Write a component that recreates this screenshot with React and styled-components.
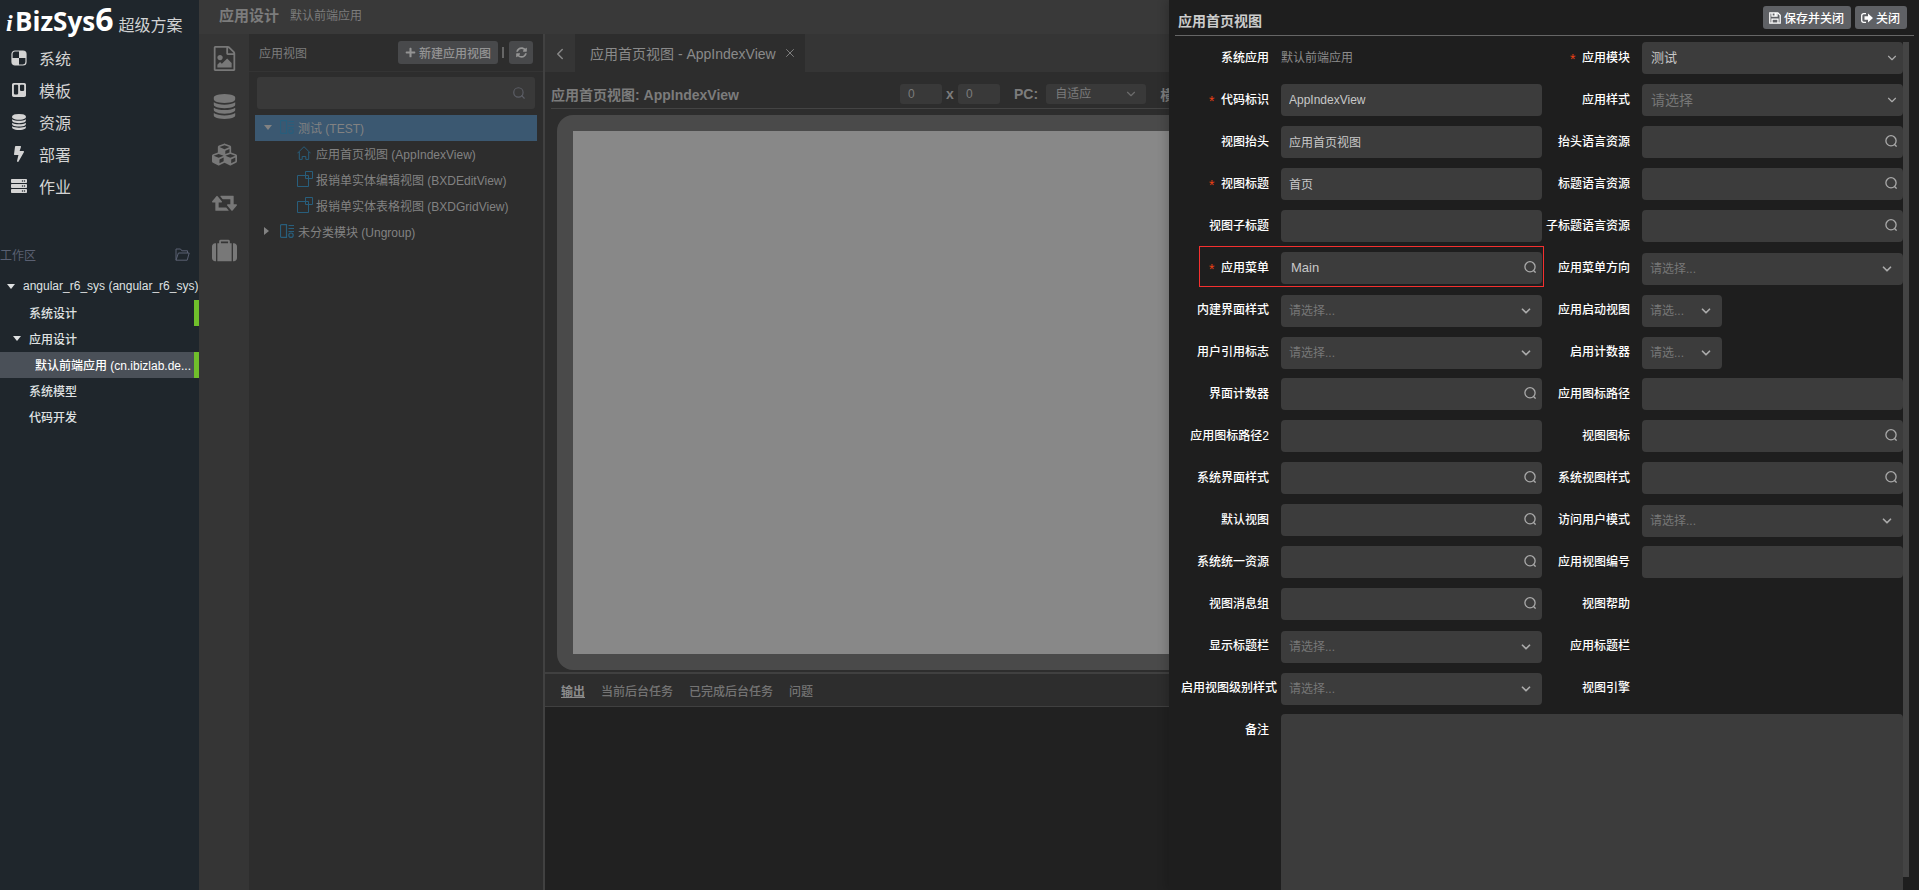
import styled, { createGlobalStyle, css } from 'styled-components';
import { FaBolt, FaCubes, FaPlus, FaServer, FaSyncAlt, FaTrello } from 'react-icons/fa';
import { FiChevronDown, FiChevronLeft, FiSearch, FiX } from 'react-icons/fi';

const menus = [
    { label: '系统', icon: <CheckerIcon /> },
    { label: '模板', icon: <FaTrello /> },
    { label: '资源', icon: <DatabaseIcon /> },
    { label: '部署', icon: <FaBolt /> },
    { label: '作业', icon: <FaServer /> }
];

const workspace = [
    { label: 'angular_r6_sys (angular_r6_sys)', level: 0, open: true },
    { label: '系统设计', level: 1, mark: true },
    { label: '应用设计', level: 1, open: true },
    { label: '默认前端应用 (cn.ibizlab.de...', level: 2, mark: true, active: true },
    { label: '系统模型', level: 1 },
    { label: '代码开发', level: 1 }
];

const rail = [
    { label: '视图', icon: <FileImageIcon /> },
    { label: '数据', icon: <DatabaseIcon /> },
    { label: '组件', icon: <FaCubes /> },
    { label: '流转', icon: <RetweetIcon /> },
    { label: '资源包', icon: <SuitcaseIcon /> }
];

const views = [
    { label: '测试 (TEST)', icon: <ModuleIcon />, caret: 'down', active: true },
    { label: '应用首页视图 (AppIndexView)', icon: <HomeIcon />, child: true },
    { label: '报销单实体编辑视图 (BXDEditView)', icon: <ViewIcon />, child: true },
    { label: '报销单实体表格视图 (BXDGridView)', icon: <ViewIcon />, child: true },
    { label: '未分类模块 (Ungroup)', icon: <ModuleIcon />, caret: 'right' }
];

const outputTabs = ['输出', '当前后台任务', '已完成后台任务', '问题'];

// type: text | input | picker | combo | select | none
const fields = [
    { name: 'sysapp', label: '系统应用', type: 'text', value: '默认前端应用' },
    { name: 'module', label: '应用模块', type: 'combo', value: '测试', required: true },
    { name: 'code', label: '代码标识', type: 'input', value: 'AppIndexView', required: true },
    { name: 'style', label: '应用样式', type: 'combo', placeholder: '请选择' },
    { name: 'caption', label: '视图抬头', type: 'input', value: '应用首页视图' },
    { name: 'captionRes', label: '抬头语言资源', type: 'picker' },
    { name: 'title', label: '视图标题', type: 'input', value: '首页', required: true },
    { name: 'titleRes', label: '标题语言资源', type: 'picker' },
    { name: 'subtitle', label: '视图子标题', type: 'input' },
    { name: 'subtitleRes', label: '子标题语言资源', type: 'picker' },
    { name: 'menu', label: '应用菜单', type: 'picker', value: 'Main', required: true, marked: true },
    { name: 'menuDir', label: '应用菜单方向', type: 'select', placeholder: '请选择...' },
    { name: 'innerStyle', label: '内建界面样式', type: 'select', placeholder: '请选择...' },
    { name: 'startView', label: '应用启动视图', type: 'select', placeholder: '请选...', small: true },
    { name: 'userRef', label: '用户引用标志', type: 'select', placeholder: '请选择...' },
    { name: 'counterOn', label: '启用计数器', type: 'select', placeholder: '请选...', small: true },
    { name: 'counter', label: '界面计数器', type: 'picker' },
    { name: 'iconPath', label: '应用图标路径', type: 'input' },
    { name: 'iconPath2', label: '应用图标路径2', type: 'input' },
    { name: 'viewIcon', label: '视图图标', type: 'picker' },
    { name: 'sysStyle', label: '系统界面样式', type: 'picker' },
    { name: 'sysViewStyle', label: '系统视图样式', type: 'picker' },
    { name: 'defView', label: '默认视图', type: 'picker' },
    { name: 'userMode', label: '访问用户模式', type: 'select', placeholder: '请选择...' },
    { name: 'unires', label: '系统统一资源', type: 'picker' },
    { name: 'viewNo', label: '应用视图编号', type: 'input' },
    { name: 'msgGroup', label: '视图消息组', type: 'picker' },
    { name: 'help', label: '视图帮助', type: 'none' },
    { name: 'showTitle', label: '显示标题栏', type: 'select', placeholder: '请选择...' },
    { name: 'appTitle', label: '应用标题栏', type: 'none' },
    { name: 'levelStyle', label: '启用视图级别样式', type: 'select', placeholder: '请选择...' },
    { name: 'engine', label: '视图引擎', type: 'none' }
];

function CheckerIcon() {
    return (
        <svg viewBox="0 0 16 16" width="1em" height="1em" fill="currentColor">
            <rect x="1" y="1" width="14" height="14" rx="3" fill="none" stroke="currentColor" strokeWidth="1.2" />
            <path d="M8 1h4a3 3 0 0 1 3 3v4H8zM1 8h7v7H4a3 3 0 0 1-3-3z" />
        </svg>
    );
}

function DatabaseIcon() {
    return (
        <svg viewBox="0 0 1536 1792" width="1em" height="1em" fill="currentColor">
            <path d="M768 768q237 0 443-43t325-127v170q0 69-103 128t-280 93.5-385 34.5-385-34.5-280-93.5-103-128v-170q119 84 325 127t443 43zm0 768q237 0 443-43t325-127v170q0 69-103 128t-280 93.5-385 34.5-385-34.5-280-93.5-103-128v-170q119 84 325 127t443 43zm0-384q237 0 443-43t325-127v170q0 69-103 128t-280 93.5-385 34.5-385-34.5-280-93.5-103-128v-170q119 84 325 127t443 43zm0-1152q208 0 385 34.5t280 93.5 103 128v128q0 69-103 128t-280 93.5-385 34.5-385-34.5-280-93.5-103-128v-128q0-69 103-128t280-93.5 385-34.5z" />
        </svg>
    );
}

function FileImageIcon() {
    return (
        <svg viewBox="0 0 1792 1792" width="1em" height="1em" fill="currentColor">
            <path d="M1596 380q28 28 48 76t20 88v1152q0 40-28 68t-68 28h-1344q-40 0-68-28t-28-68v-1600q0-40 28-68t68-28h896q40 0 88 20t76 48zm-444-244v376h376q-10-29-22-41l-313-313q-12-12-41-22zm384 1528v-1024h-416q-40 0-68-28t-28-68v-416h-768v1536h1280zm-128-448v320h-1024v-192l192-192 128 128 384-384zm-832-192q-80 0-136-56t-56-136 56-136 136-56 136 56 56 136-56 136-136 56z" />
        </svg>
    );
}

function RetweetIcon() {
    return (
        <svg viewBox="0 0 1920 1792" width="1em" height="1em" fill="currentColor">
            <path d="M1280 1504q0 13-9.5 22.5t-22.5 9.5h-960q-8 0-13.5-2t-9-7-5.5-8-3-11.5-1-11.5v-600h-192q-26 0-45-19t-19-45q0-24 15-41l320-384q19-22 49-22t49 22l320 384q15 17 15 41 0 26-19 45t-45 19h-192v384h576q16 0 25 11l160 192q7 10 7 21zm640-416q0 24-15 41l-320 384q-20 23-49 23t-49-23l-320-384q-15-17-15-41 0-26 19-45t45-19h192v-384h-576q-16 0-25-12l-160-192q-7-9-7-20 0-13 9.5-22.5t22.5-9.5h960q8 0 13.5 2t9 7 5.5 8 3 11.5 1 11.5v600h192q26 0 45 19t19 45z" />
        </svg>
    );
}

function SuitcaseIcon() {
    return (
        <svg viewBox="0 0 1792 1792" width="1em" height="1em" fill="currentColor">
            <path d="M640 384h512v-128h-512v128zm-352 0v1280h-64q-92 0-158-66t-66-158v-832q0-92 66-158t158-66h64zm1120 0v1280h-1024v-1280h128v-160q0-40 28-68t68-28h576q40 0 68 28t28 68v160h128zm384 224v832q0 92-66 158t-158 66h-64v-1280h64q92 0 158 66t66 158z" />
        </svg>
    );
}

function OpenFolderIcon() {
    return (
        <svg viewBox="0 0 15 13" width="15" height="13" fill="none" stroke="currentColor">
            <path d="M1 12.200V1h4.500l1.300 1.800h5.700V5M1 12.200 3.400 5h10.800l-2 7.200z" />
        </svg>
    );
}

function ModuleIcon() {
    return (
        <svg viewBox="0 0 14 14" width="14" height="14" fill="none" stroke="currentColor" strokeWidth="1.2">
            <path d="M1.500.6h5v12.800h-5a1 1 0 0 1-1-1V1.600a1 1 0 0 1 1-1z" />
            <path d="M8.500 1.500H14M8.500 4.500H14M8.500 7.500H14" />
            <circle cx="11" cy="11.200" r="2.200" />
        </svg>
    );
}

function HomeIcon() {
    return (
        <svg viewBox="0 0 14 14" width="14" height="14" fill="none" stroke="currentColor">
            <path d="M0.400 7.300 7 0.700l6.600 6.600M2.300 6v7.400h2.900v-2.900h3.600v2.900h2.900V6" />
        </svg>
    );
}

function ViewIcon() {
    return (
        <svg viewBox="0 0 16 16" width="16" height="16" fill="none" stroke="currentColor">
            <path d="M0.5 4.5h11v11H0.5zM8.500.5h7v7h-7z" />
        </svg>
    );
}

function PickerIcon() {
    return (
        <svg viewBox="0 0 12 12" width="12" height="12" fill="none" stroke="currentColor" strokeWidth="1.3">
            <circle cx="6" cy="5.8" r="5.1" />
            <path d="M9.300 9.300 11.600 11.600" />
        </svg>
    );
}

function SaveIcon() {
    return (
        <svg viewBox="0 0 12 12" width="12" height="12" fill="none" stroke="currentColor" strokeWidth="1.3">
            <path d="M.8.8h8l2.400 2.400v8H.8z" />
            <path d="M3 11V7.200h6V11" />
            <path d="M3 1v3.200h5V1" />
            <path d="M6.500 1v3" strokeWidth="2" />
        </svg>
    );
}

function ExitIcon() {
    return (
        <svg viewBox="0 0 12 10" width="12" height="10">
            <path d="M5 .7H2.700a2 2 0 0 0-2 2v4.600a2 2 0 0 0 2 2H5" fill="none" stroke="currentColor" strokeWidth="1.300" />
            <path d="M3.500 3.200h3.500V.4L12 5 7 9.600V6.800H3.500z" fill="currentColor" />
        </svg>
    );
}

function Control({ field }) {
    const { name, type, value, placeholder, small } = field;

    if (type === 'none') return null;
    if (type === 'text') return <PlainValue>{value}</PlainValue>;
    if (type === 'input') return <TextBox id={name} defaultValue={value} />;
    if (type === 'picker') {
        return (
            <ControlBox>
                <TextBox id={name} defaultValue={value} $picker />
                <Trailing $right={6} $raised><PickerIcon /></Trailing>
            </ControlBox>
        );
    }
    const combo = type === 'combo';
    return (
        <ControlBox $small={small} $shift={!combo}>
            <SelectBox id={name} $combo={combo} $empty={!value}>
                <option>{value || placeholder}</option>
            </SelectBox>
            <Trailing $right={combo ? 4 : 9}>
                <FiChevronDown size={14} strokeWidth={combo ? 2 : 3} />
            </Trailing>
        </ControlBox>
    );
}

function Drawer() {
    return (
        <DrawerPanel>
            <DrawerHead>
                <DrawerTitle>应用首页视图</DrawerTitle>
                <HeadButton><SaveIcon />保存并关闭</HeadButton>
                <HeadButton><ExitIcon />关闭</HeadButton>
            </DrawerHead>
            <DrawerBody>
                <Form>
                    {fields.map((field) => (
                        <Field key={field.name} $marked={field.marked}>
                            <Label
                                as={field.type === 'text' || field.type === 'none' ? 'span' : 'label'}
                                htmlFor={field.type === 'text' || field.type === 'none' ? undefined : field.name}
                            >
                                {field.required && <Star>*</Star>}
                                {field.label}
                            </Label>
                            <Control field={field} />
                        </Field>
                    ))}
                    <Field $wide>
                        <Label htmlFor="memo">备注</Label>
                        <Memo id="memo" />
                    </Field>
                </Form>
                <ScrollThumb />
            </DrawerBody>
        </DrawerPanel>
    );
}

function App() {
    return (
        <Page>
            <GlobalStyle />
            <Sidebar>
                <Logo>
                    <LogoMark>i</LogoMark>
                    <LogoName>BizSys</LogoName>
                    <LogoDigit>6</LogoDigit>
                    <LogoSuffix>超级方案</LogoSuffix>
                </Logo>
                <Menu>
                    {menus.map((menu) => (
                        <MenuItem key={menu.label} href="#">
                            {menu.icon}
                            <span>{menu.label}</span>
                        </MenuItem>
                    ))}
                </Menu>
                <WorkspaceHead>
                    <span>工作区</span>
                    <OpenFolderIcon />
                </WorkspaceHead>
                {workspace.map((node) => (
                    <WorkspaceRow key={node.label} $level={node.level} $mark={node.mark} $active={node.active}>
                        <Caret $dir={node.open ? 'down' : undefined} />
                        <span>{node.label}</span>
                    </WorkspaceRow>
                ))}
            </Sidebar>

            <Workbench>
                <AppHeader>
                    <AppTitle>应用设计</AppTitle>
                    <span>默认前端应用</span>
                </AppHeader>
                <Columns>
                    <Rail>
                        {rail.map((item) => (
                            <RailButton key={item.label} aria-label={item.label}>{item.icon}</RailButton>
                        ))}
                    </Rail>

                    <ViewPanel>
                        <PanelHead>
                            <PanelTitle>应用视图</PanelTitle>
                            <DimButton><FaPlus size={11} />新建应用视图</DimButton>
                            <Bar />
                            <DimButton $square aria-label="刷新"><FaSyncAlt size={11} /></DimButton>
                        </PanelHead>
                        <SearchBox>
                            <SearchInput aria-label="搜索视图" />
                            <FiSearch size={14} />
                        </SearchBox>
                        <ViewTree>
                            {views.map((view) => (
                                <ViewRow key={view.label} $child={view.child} $active={view.active}>
                                    {!view.child && <Caret $dir={view.caret} />}
                                    <ViewIconBox $child={view.child}>{view.icon}</ViewIconBox>
                                    <span>{view.label}</span>
                                </ViewRow>
                            ))}
                        </ViewTree>
                    </ViewPanel>

                    <Editor>
                        <TabBar>
                            <TabScroll aria-label="向左"><FiChevronLeft size={18} /></TabScroll>
                            <Tab>
                                <span>应用首页视图 - AppIndexView</span>
                                <FiX size={14} strokeWidth={1.5} />
                            </Tab>
                        </TabBar>
                        <Stage>
                            <Toolbar>
                                <ToolbarTitle>应用首页视图: AppIndexView</ToolbarTitle>
                                <SizeInput aria-label="宽度" defaultValue="0" />
                                <Times>x</Times>
                                <SizeInput aria-label="高度" defaultValue="0" />
                                <ToolLabel htmlFor="pc">PC:</ToolLabel>
                                <FitBox>
                                    <FitSelect id="pc"><option>自适应</option></FitSelect>
                                    <Trailing $right={8}><FiChevronDown size={14} /></Trailing>
                                </FitBox>
                                <ToolLabel as="span">横屏:</ToolLabel>
                            </Toolbar>
                            <Bezel><Screen /></Bezel>
                        </Stage>
                        <Output>
                            <OutputTabs>
                                {outputTabs.map((tab, i) => (
                                    <OutputTab key={tab} $active={i === 0}>{tab}</OutputTab>
                                ))}
                            </OutputTabs>
                        </Output>
                    </Editor>
                </Columns>
            </Workbench>

            <Drawer />
        </Page>
    );
}

const GlobalStyle = createGlobalStyle`
    * { box-sizing: border-box; }
    body { margin: 0; background: #212121; }
    body, button, input, select, textarea {
        font-family: "Liberation Sans", "Noto Sans CJK SC", sans-serif;
        font-size: 12px;
    }
    button, input, select, textarea { border: 0; margin: 0; outline: none; }
    svg { flex: none; display: block; }
`;

const Page = styled.div`
    position: relative;
    display: flex;
    height: 100vh;
    overflow: hidden;
`;

/* ---- sidebar ---- */
const Sidebar = styled.nav`
    flex: 0 0 199px;
    background: #1f262c;
    color: #dcdcdc;
    white-space: nowrap;
`;

const Logo = styled.div`
    display: flex;
    align-items: baseline;
    height: 42px;
    padding-left: 6px;
    line-height: 38px;
    color: #fff;
    font-family: "Open Sans", sans-serif;
    font-weight: 700;
`;

const LogoMark = styled.span`
    width: 9px;
    font: italic 700 24px "Liberation Serif", serif;
`;

const LogoName = styled.span`
    font-size: 26px;
`;

const LogoDigit = styled.span`
    font-size: 32px;
`;

const LogoSuffix = styled.span`
    margin-left: 5px;
    color: #d0d2d3;
    font: 400 16px "Noto Sans CJK SC", sans-serif;
`;

const Menu = styled.div`
    display: flex;
    flex-direction: column;
`;

const MenuItem = styled.a`
    display: flex;
    align-items: center;
    gap: 12px;
    height: 32px;
    padding-left: 11px;
    color: #d4d4d4;
    font-size: 16px;
    text-decoration: none;
`;

const WorkspaceHead = styled.div`
    display: flex;
    align-items: center;
    justify-content: space-between;
    height: 40px;
    margin-top: 32px;
    padding-right: 9px;
    color: #5a6072;
`;

const WorkspaceRow = styled.div`
    display: flex;
    align-items: center;
    height: 26px;
    padding-bottom: 2px;
    padding-left: ${(p) => p.$level * 6 + 7}px;
    background: ${(p) => (p.$active ? '#4a5058' : 'transparent')};
    color: ${(p) => (p.$active ? '#fff' : '#dfe1e2')};
    font-weight: 500;
    ${(p) => p.$mark && css`border-right: 5px solid #70bf2b;`}
`;

const Caret = styled.i`
    flex: 0 0 16px;
    &::before {
        content: '';
        display: block;
        width: 0;
        border: 4px solid transparent;
        ${(p) => p.$dir === 'down' && css`border-top: 5px solid currentColor; border-bottom: 0;`}
        ${(p) => p.$dir === 'right' && css`border-left: 5px solid currentColor; border-right: 0;`}
    }
`;

/* ---- workbench ---- */
const Workbench = styled.div`
    flex: 1;
    min-width: 0;
    display: flex;
    flex-direction: column;
    color: #7c7c7c;
`;

const AppHeader = styled.header`
    flex: 0 0 34px;
    display: flex;
    align-items: center;
    gap: 11px;
    padding: 0 20px 5px;
    background: #393939;
`;

const AppTitle = styled.strong`
    font-size: 15px;
`;

const Columns = styled.div`
    flex: 1;
    min-height: 0;
    display: flex;
`;

const Rail = styled.div`
    flex: 0 0 50px;
    display: flex;
    flex-direction: column;
    background: #353535;
`;

const RailButton = styled.button`
    display: grid;
    place-items: center;
    height: 48px;
    padding: 0;
    background: none;
    color: #787878;
    font-size: 25px;
`;

const ViewPanel = styled.section`
    flex: 0 0 296px;
    border-right: 2px solid #414141;
    background: #2d2d2d;
`;

const PanelHead = styled.div`
    display: flex;
    align-items: center;
    height: 38px;
    padding: 0 10px;
    border-bottom: 1px solid #343434;
`;

const PanelTitle = styled.span`
    flex: 1;
`;

const DimButton = styled.button`
    display: flex;
    align-items: center;
    justify-content: center;
    gap: 3px;
    width: ${(p) => (p.$square ? 24 : 100)}px;
    height: 23px;
    padding: 0;
    border-radius: 3px;
    background: #48494b;
    color: #949494;
    font-weight: 500;
`;

const Bar = styled.i`
    width: 2px;
    height: 11px;
    margin: 0 5px 0 4px;
    background: #666;
`;

const SearchBox = styled.div`
    display: flex;
    align-items: center;
    height: 32px;
    margin: 5px 8px 6px;
    padding-right: 9px;
    border-radius: 3px;
    background: #393939;
    color: #5c5e66;
`;

const SearchInput = styled.input`
    flex: 1;
    min-width: 0;
    background: none;
    color: #888;
`;

const ViewTree = styled.div`
    padding: 0 6px;
`;

const ViewRow = styled.div`
    display: flex;
    align-items: center;
    height: 26px;
    padding-bottom: 2px;
    padding-left: ${(p) => (p.$child ? 42 : 9)}px;
    background: ${(p) => (p.$active ? '#3b5871' : 'transparent')};
    color: #828282;
`;

const ViewIconBox = styled.span`
    width: ${(p) => (p.$child ? 19 : 18)}px;
    color: #285e7c;
`;

/* ---- editor ---- */
const Editor = styled.main`
    flex: 1;
    min-width: 0;
    display: flex;
    flex-direction: column;
    background: #2d2d2d;
`;

const TabBar = styled.div`
    flex: 0 0 38px;
    display: flex;
    background: #353535;
`;

const TabScroll = styled.button`
    width: 30px;
    padding: 2px 0 0 6px;
    background: none;
    color: #888;
`;

const Tab = styled.div`
    display: flex;
    align-items: center;
    gap: 7px;
    padding: 0 8px 1px 15px;
    background: #2d2d2d;
    color: #8a8a8a;
    font-size: 14px;
`;

const Stage = styled.div`
    flex: 1;
    min-height: 0;
    display: flex;
    flex-direction: column;
    padding: 7px 6px 2px;
`;

const Toolbar = styled.div`
    display: flex;
    align-items: center;
    height: 30px;
    border-bottom: 1px solid #444;
    white-space: nowrap;
`;

const ToolbarTitle = styled.strong`
    width: 349px;
    font-size: 14px;
`;

const SizeInput = styled.input`
    width: 42px;
    height: 20px;
    padding: 0 8px;
    border-radius: 3px;
    background: #393939;
    color: #7c7c7c;
`;

const Times = styled.b`
    width: 16px;
    font-size: 14px;
    text-align: center;
`;

const ToolLabel = styled.label`
    padding: 0 8px 0 14px;
    font-size: 14px;
    font-weight: 700;
`;

const FitBox = styled.div`
    position: relative;
    width: 100px;
`;

const FitSelect = styled.select`
    appearance: none;
    width: 100%;
    height: 20px;
    padding: 0 9px;
    border-radius: 3px;
    background: #393939;
    color: #7c7c7c;
`;

const Bezel = styled.div`
    flex: 1;
    display: flex;
    margin: 6px 6px 0;
    padding: 16px;
    border-radius: 16px;
    background: #4a4a4a;
`;

const Screen = styled.div`
    flex: 1;
    background: #888;
`;

const Output = styled.section`
    flex: 0 0 218px;
    border-top: 2px solid #404040;
    background: #212121;
`;

const OutputTabs = styled.div`
    display: flex;
    gap: 16px;
    height: 33px;
    padding: 0 16px;
    border-bottom: 1px solid #404040;
    background: #2d2d2d;
`;

const OutputTab = styled.button`
    padding: 0;
    background: none;
    color: ${(p) => (p.$active ? '#8c8c8c' : '#747474')};
    font-weight: ${(p) => (p.$active ? 700 : 500)};
    text-decoration: ${(p) => (p.$active ? 'underline' : 'none')};
`;

/* ---- drawer ---- */
const DrawerPanel = styled.aside`
    position: absolute;
    top: 0;
    right: 0;
    bottom: 0;
    width: 750px;
    display: flex;
    flex-direction: column;
    background: #1e1e1e;
    box-shadow: -2px 0 10px rgba(0, 0, 0, 0.2);
    color: #eee;
`;

const DrawerHead = styled.header`
    display: flex;
    align-items: center;
    gap: 4px;
    height: 36px;
    margin: 0 5px 6px 6px;
    padding: 0 7px 0 3px;
    border-bottom: 1px solid #666;
`;

const DrawerTitle = styled.strong`
    flex: 1;
    padding-top: 5px;
    color: #ccc;
    font-size: 14px;
`;

const HeadButton = styled.button`
    display: flex;
    align-items: center;
    gap: 3px;
    height: 23px;
    padding: 0 7px 0 6px;
    border-radius: 3px;
    background: #5f6165;
    color: #fff;
    font-weight: 500;
`;

const DrawerBody = styled.div`
    flex: 1;
    min-height: 0;
    display: flex;
    padding: 0 10px 0 12px;
    overflow: hidden;
`;

const Form = styled.form`
    flex: 1;
    display: grid;
    grid-template-columns: 1fr 1fr;
    grid-auto-rows: min-content;
    row-gap: 10px;
`;

const Field = styled.div`
    position: relative;
    display: flex;
    min-height: 32px;
    max-height: ${(p) => (p.$wide ? 'none' : '32px')};
    ${(p) => p.$wide && css`grid-column: 1 / -1;`}
    ${(p) => p.$marked && css`
        &::after {
            content: '';
            position: absolute;
            inset: -6px -2px -3px 18px;
            border: 1px solid #f5302f;
            pointer-events: none;
        }
    `}
`;

const Label = styled.label`
    flex: 0 0 100px;
    min-width: 0;
    padding-right: 12px;
    color: #fff;
    font-weight: 500;
    line-height: 32px;
    text-align: right;
    white-space: nowrap;
`;

const Star = styled.span`
    margin-right: 5px;
    color: #ed4014;
    font-family: "Liberation Mono", monospace;
    font-size: 14px;
    line-height: 1;
    vertical-align: -3px;
`;

const PlainValue = styled.span`
    color: #8c8c8c;
    line-height: 32px;
`;

const ControlBox = styled.div`
    position: relative;
    flex: ${(p) => (p.$small ? '0 0 80px' : 1)};
    display: flex;
    height: 32px;
    margin-top: ${(p) => (p.$shift ? 1 : 0)}px;
`;

const boxLook = css`
    flex: 1;
    min-width: 0;
    height: 32px;
    border-radius: 4px;
    background: #3c3c3c;
    color: #c8c8c8;
`;

const TextBox = styled.input`
    ${boxLook}
    padding: ${(p) => (p.$picker ? '0 24px 1px 10px' : '0 8px 1px')};
    font-size: ${(p) => (p.$picker ? 13 : 12)}px;
`;

const SelectBox = styled.select`
    ${boxLook}
    appearance: none;
    padding: 0 ${(p) => (p.$combo ? 9 : 8)}px 1px;
    color: ${(p) => (p.$empty ? '#777' : '#c8c8c8')};
    font-size: ${(p) => (p.$combo ? (p.$empty ? 14 : 13) : 12)}px;
`;

const Trailing = styled.span`
    position: absolute;
    top: 0;
    right: ${(p) => p.$right}px;
    bottom: ${(p) => (p.$raised ? 2 : 0)}px;
    display: flex;
    align-items: center;
    color: #aaa;
    pointer-events: none;
    ${FitBox} & { color: #6c6c6c; }
`;

const Memo = styled.textarea`
    ${boxLook}
    height: 240px;
    padding: 8px;
    resize: none;
`;

const ScrollThumb = styled.i`
    flex: 0 0 6px;
    height: calc(100% - 13px);
    background: #444;
`;

export default App;
